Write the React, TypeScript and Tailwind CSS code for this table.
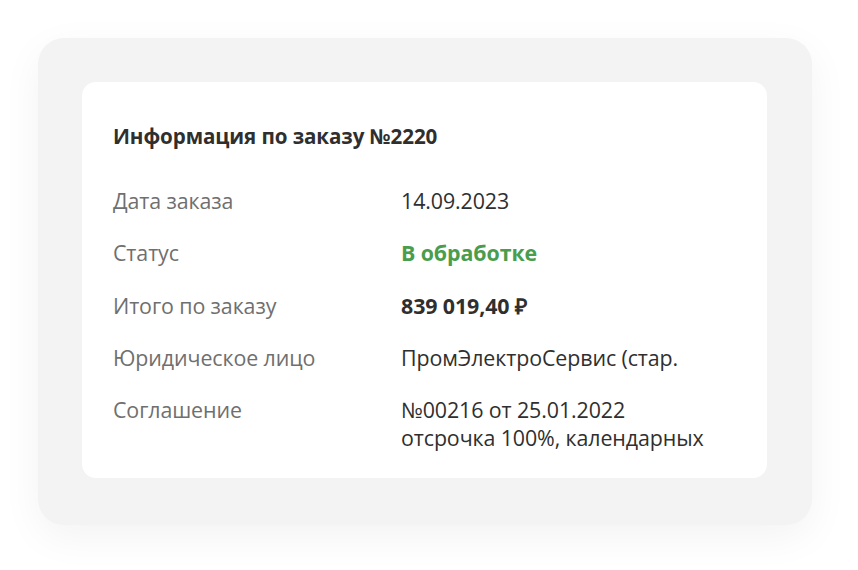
import React from "react";

const rows: { label: string; value: React.ReactNode }[] = [
  { label: "Дата заказа", value: "14.09.2023" },
  { label: "Статус", value: <span className="font-bold text-[#4a9d4c]">В обработке</span> },
  { label: "Итого по заказу", value: <span className="font-bold">839 019,40 ₽</span> },
  { label: "Юридическое лицо", value: "ПромЭлектроСервис (стар." },
  {
    label: "Соглашение",
    value: (
      <>
        №00216 от 25.01.2022
        <br />
        отсрочка 100%, календарных
      </>
    ),
  },
];

export default function App() {
  return (
    <div
      className="w-[858px] h-[570px] bg-white pt-[38px] pl-[38px]"
      style={{ fontFamily: '"Open Sans", sans-serif' }}
    >
      <div className="w-[774px] h-[487px] rounded-[26px] bg-[#f3f3f3] shadow-[0_12px_40px_rgba(0,0,0,0.05)] p-[44px]">
        <div className="w-[685px] h-[396px] rounded-[14px] bg-white pl-[31px] pt-[40px]">
          <h1 className="text-[20.6px] leading-[28px] font-bold text-[#2f2f2f] tracking-[-0.1px]">
            Информация по заказу №2220
          </h1>
          <div className="mt-[37px] grid grid-cols-[288px_1fr] gap-y-[24.3px] text-[21.4px] leading-[28px] tracking-[-0.1px]">
            {rows.map((r) => (
              <React.Fragment key={r.label}>
                <div className="text-[#6f6f6f]">{r.label}</div>
                <div className="text-[#2f2f2f]">{r.value}</div>
              </React.Fragment>
            ))}
          </div>
        </div>
      </div>
    </div>
  );
}
